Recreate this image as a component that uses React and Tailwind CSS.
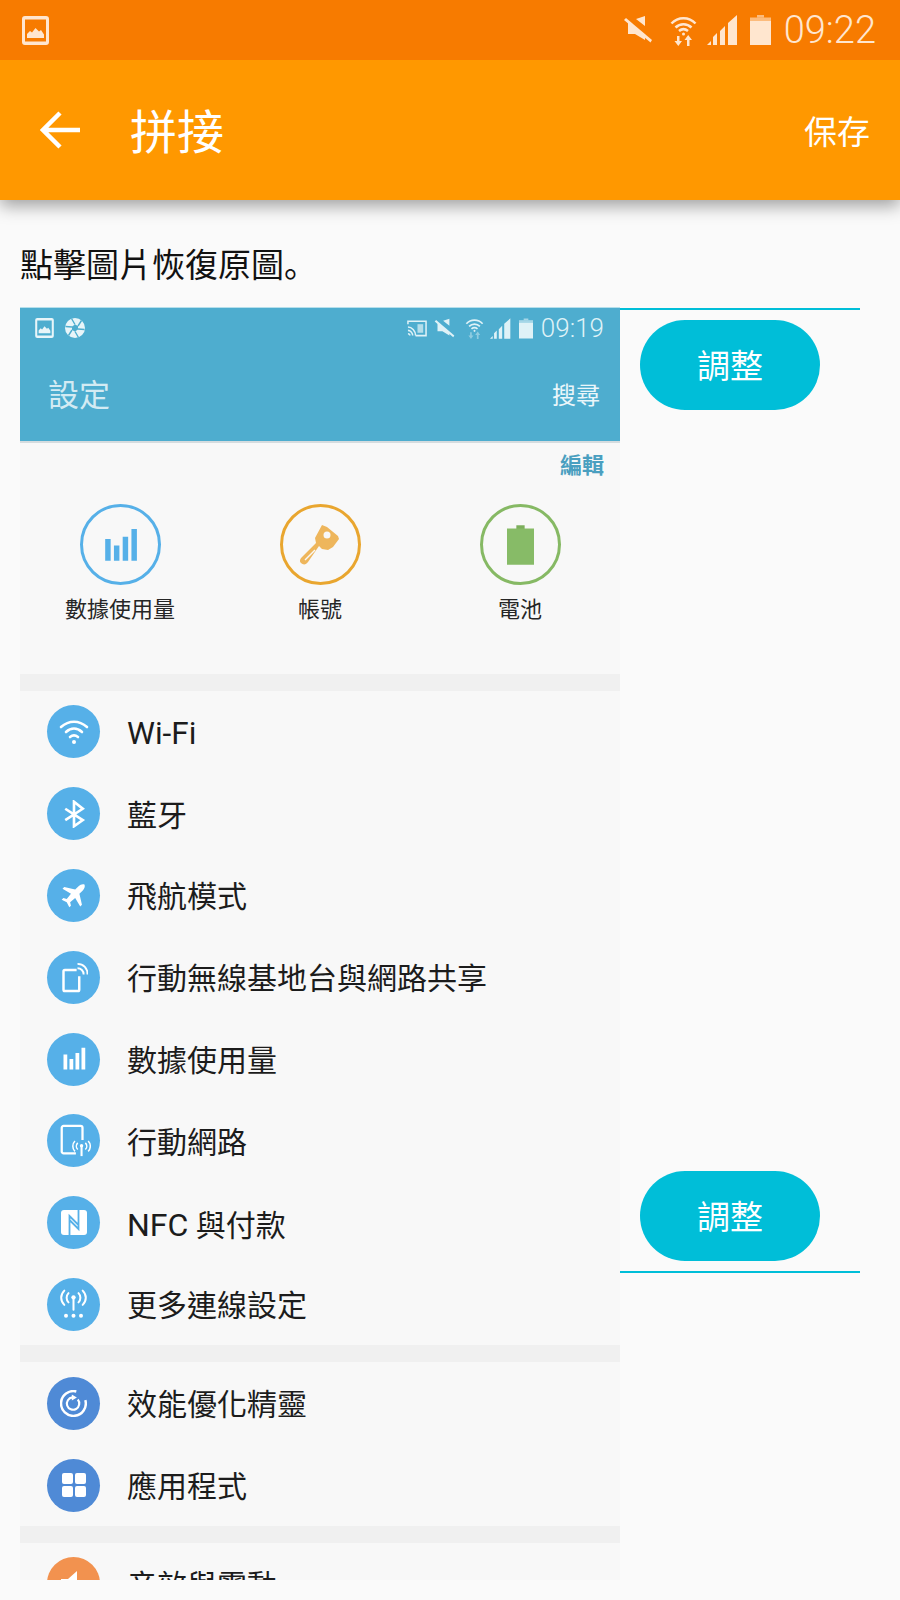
import React from 'react'

const ImageIcon = ({ className }) => (
    <svg viewBox="0 0 27 29" className={className} fill="currentColor">
        <path fillRule="evenodd" d="M3 0h21a3 3 0 0 1 3 3v23a3 3 0 0 1-3 3H3a3 3 0 0 1-3-3V3a3 3 0 0 1 3-3zM3 3.500v22h21v-22z" />
        <path d="M5 22v-4l3-3 2 1.500 3.500-4.500 3.500 3.500 2-1.500 3 4.500V22z" />
    </svg>
)

const MuteIcon = ({ className }) => (
    <svg viewBox="0 0 30 30" className={className} fill="currentColor">
        <path d="M22 1v10L13 4zM6 7l16 13v5L12 19H5V8z" />
        <path d="M1 5l2-2 26 22-1.500 2.500z" />
    </svg>
)

const WifiArrowsIcon = ({ className, arrowOpacity = 1 }) => (
    <svg viewBox="0 0 27 31" className={className} fill="none" stroke="currentColor">
        <path d="M1.500 8.500C8 1.500 19 1.500 25.500 8.500" strokeWidth="2.500" />
        <path d="M5.500 12.500C10 8 17 8 21.500 12.500" strokeWidth="2.500" />
        <path d="M9 16c3-2.500 6-2.500 9 0" strokeWidth="2.500" />
        <circle cx="13.500" cy="19" r="1.500" fill="currentColor" stroke="none" />
        <g fill="currentColor" stroke="none" opacity={arrowOpacity}>
            <path d="M7 21h2.500v5H12l-3.700 5-3.800-5H7z" />
            <path d="M17 31h2.500v-6H22l-3.800-5-3.700 5H17z" />
        </g>
    </svg>
)

const SignalIcon = ({ className }) => (
    <svg viewBox="0 0 31 30" className={className} fill="currentColor">
        <path d="M0 30l4-4v4zM6 30v-8l4-4v12zM13 30V16l5-5v19zM21 30V8l9-8v30h-9z" />
    </svg>
)

const BatteryIcon = ({ className }) => (
    <svg viewBox="0 0 21 30" className={className} fill="currentColor">
        <path d="M7 0h7v2.500H7z" opacity="0.6" />
        <path d="M0 2.500h21V6H0z" opacity="0.6" />
        <path d="M0 6h21v24H0z" />
    </svg>
)

const CastIcon = ({ className }) => (
    <svg viewBox="0 0 21 18" className={className} fill="none" stroke="currentColor" strokeWidth="1.600">
        <path d="M1 5V2h19v15H9" />
        <path d="M1 8c4 0 8 4 8 9M1 11.500c2.500 0 5 2.500 5 5.500M1 15c1 0 2 1 2 2" />
        <rect x="11" y="5" width="6" height="9" fill="currentColor" stroke="none" opacity="0.7" />
    </svg>
)

const ApertureIcon = ({ className }) => (
    <svg viewBox="0 0 20 20" className={className}>
        <circle cx="10" cy="10" r="10" fill="currentColor" />
        <g stroke="#4eadcf" strokeWidth="1.400" fill="none">
            <path d="M6.500 0.500 10 6.500M16.500 2.500 13 8M19.500 11.500 13 11M13.500 19.500 10 13.500M3.500 17.500 7 12M0.500 8.500 7 9" />
        </g>
        <path d="M10 6.500 13 8v3.500L10 13.500 7 12V8.500z" fill="#4eadcf" />
    </svg>
)

const WifiGlyph = () => (
    <svg viewBox="0 0 32 32" className="w-8 h-8" fill="none" stroke="#ffffff" strokeWidth="2.600" strokeLinecap="round">
        <path d="M3 11c8-7 18-7 26 0" />
        <path d="M8 16c5-4.500 11-4.500 16 0" />
        <path d="M12 21c2.500-2 5.500-2 8 0" />
        <circle cx="16" cy="26" r="2" fill="#ffffff" stroke="none" />
    </svg>
)

const BluetoothGlyph = () => (
    <svg viewBox="0 0 32 32" className="w-[28px] h-[28px]" fill="none" stroke="#ffffff" strokeWidth="3">
        <path d="M6 10l20 13-10 7V2l10 8L6 23" />
    </svg>
)

const PlaneGlyph = () => (
    <svg viewBox="0 0 32 32" className="w-[27px] h-[27px]" fill="#ffffff">
        <path d="M29 3c-2-1-5 0-7 2l-4 4L5 6 3 8l10 6-5 6-4-1-2 2 6 3 3 6 2-2-1-4 6-5 6 10 2-2-3-13 4-4c2-2 3-5 2-7z" />
    </svg>
)

const HotspotGlyph = () => (
    <svg viewBox="0 0 32 36" className="w-[28px] h-[32px]" fill="none" stroke="#ffffff" strokeWidth="2">
        <path d="M19 10H5.500A1.500 1.500 0 0 0 4 11.500v21A1.500 1.500 0 0 0 5.500 34h15a1.500 1.500 0 0 0 1.500-1.500V17" strokeWidth="2.800" />
        <path d="M20 8c4 0 7 3 7 7M20 3c7 0 11.500 5 11.500 12" strokeWidth="2.200" />
    </svg>
)

const BarsGlyph = ({ className, fill = '#ffffff' }) => (
    <svg viewBox="0 0 32 32" className={className} fill={fill}>
        <path d="M2 10h5v20H2zM10 16h5v14h-5zM18 8h5v22h-5zM26 1h5v29h-5z" />
    </svg>
)

const MobileNetGlyph = () => (
    <svg viewBox="0 0 36 36" className="w-[34px] h-[34px]" fill="none" stroke="#ffffff" strokeWidth="2">
        <path d="M20 31H7a2 2 0 0 1-2-2V4a2 2 0 0 1 2-2h18a2 2 0 0 1 2 2v13" strokeWidth="2.400" />
        <path d="M26 23v11" strokeWidth="2.200" />
        <circle cx="26" cy="23" r="1.800" fill="#ffffff" stroke="none" />
        <path d="M22 20c-2 2-2 5 0 7M30 20c2 2 2 5 0 7M19 18c-3 3-3 8 0 11M33 18c3 3 3 8 0 11" strokeWidth="1.600" />
    </svg>
)

const NfcGlyph = () => (
    <svg viewBox="0 0 26 25" className="w-[26px] h-[25px]">
        <rect width="26" height="25" rx="3" fill="#ffffff" />
        <path d="M8.500 25V6l9 9M17.500 0v19l-9-9" fill="none" stroke="#56b0e8" strokeWidth="1.800" />
    </svg>
)

const AntennaGlyph = () => (
    <svg viewBox="0 0 32 36" className="w-[27px] h-[30px]" fill="none" stroke="#ffffff" strokeWidth="2.400" strokeLinecap="round">
        <path d="M16 11v14" />
        <circle cx="16" cy="10" r="2.600" fill="#ffffff" stroke="none" />
        <path d="M10 5c-3 3-3 8 0 11M22 5c3 3 3 8 0 11M5 2c-5 5-5 12 0 17M27 2c5 5 5 12 0 17" />
        <circle cx="7" cy="32" r="2.400" fill="#ffffff" stroke="none" />
        <circle cx="16" cy="32" r="2.400" fill="#ffffff" stroke="none" />
        <circle cx="25" cy="32" r="2.400" fill="#ffffff" stroke="none" />
    </svg>
)

const PowerGlyph = () => (
    <svg viewBox="0 0 24 24" className="w-[27px] h-[27px]" fill="none" stroke="#ffffff">
        <path d="M22.500 9A11 11 0 1 1 14.500 1.300" strokeWidth="2.200" />
        <path d="M15.800 8.500A5.500 5.500 0 1 1 11 6.600" strokeWidth="1.900" />
        <path d="M10.500 4l4.500 2.700-4.500 2.700z" fill="#ffffff" stroke="none" />
    </svg>
)

const GridGlyph = () => (
    <svg viewBox="0 0 24 24" className="w-6 h-6" fill="#ffffff">
        <rect x="0" y="0" width="11" height="11" rx="2" />
        <rect x="13" y="0" width="11" height="11" rx="2" />
        <rect x="0" y="13" width="11" height="11" rx="2" />
        <rect x="13" y="13" width="11" height="11" rx="2" />
    </svg>
)

const SoundGlyph = () => (
    <svg viewBox="0 0 32 32" className="w-8 h-8" fill="#ffffff">
        <path d="M19 3v26L10 21H3V11h7z" />
    </svg>
)

const KeyGlyph = () => (
    <svg viewBox="0 0 40 42" className="w-10 h-[42px]">
        <path fill="#eeb65c" d="M22 1l5 2 11 9 1 3-6 8-5 3-6-1-3-3L8 38c-2 3-5 3-7 1s-1-4 1-6l14-14-1-5z" />
        <circle cx="27" cy="11" r="3.500" fill="#f8f8f8" />
        <path d="M5 36l10-10" stroke="#f8f8f8" strokeWidth="1.500" />
    </svg>
)

const SmallBattery = () => (
    <svg viewBox="0 0 26 38" className="w-[27px] h-[40px]">
        <path fill="#7daf5c" d="M9 0h8v4H9z" />
        <path fill="#87bb67" d="M0 3h26v35H0z" />
    </svg>
)

const Shortcut = ({ label, ring, children }) => (
    <div className="flex flex-col items-center w-[200px]">
        <div className={`w-[81px] h-[81px] rounded-full border-[3px] ${ring} flex items-center justify-center`}>
            {children}
        </div>
        <span className="mt-[10px] text-[22px] leading-[30px] text-[#262626]">{label}</span>
    </div>
)

const Row = ({ color, label, children }) => (
    <div className="h-[81.8px] flex items-center shrink-0">
        <div className={`w-[53px] h-[53px] rounded-full ${color} flex items-center justify-center ml-[27px] shrink-0`}>
            {children}
        </div>
        <span className="ml-[27px] pt-1 text-[30px] leading-none text-[#1c1c1c]">{label}</span>
    </div>
)

const Gap = () => <div className="h-[17px] bg-[#f0f0f0] shrink-0" />

const AdjustButton = () => (
    <button className="ml-5 w-[180px] h-[90px] pt-1 rounded-full bg-[#00bed8] text-white text-[33px] flex items-center justify-center shrink-0">
        調整
    </button>
)

const App = () => {
    return (
        <div className="w-[900px] h-[1600px] bg-[#fafafa] overflow-hidden font-['Roboto','Noto_Sans_CJK_TC',sans-serif]">
            {/* status bar */}
            <div className="relative z-20 h-[60px] bg-[#f77b00] flex items-center justify-between pl-[22px] pr-6 text-[#ffe6cf]">
                <ImageIcon className="w-[27px] h-[29px]" />
                <div className="flex items-center">
                    <MuteIcon className="w-[30px] h-[30px]" />
                    <WifiArrowsIcon className="w-[27px] h-[31px] ml-[17px]" />
                    <SignalIcon className="w-[31px] h-[30px] ml-[10px]" />
                    <BatteryIcon className="w-[21px] h-[30px] ml-3" />
                    <span className="ml-[13px] text-[38px] leading-none font-light">09:22</span>
                </div>
            </div>

            {/* app bar */}
            <div className="relative z-10 h-[140px] bg-[#ff9800] flex items-center justify-between pl-10 pr-[30px] text-white shadow-[0_6px_16px_rgba(0,0,0,0.36)]">
                <div className="flex items-center">
                    <svg viewBox="0 0 40 38" className="w-10 h-[38px]" fill="none" stroke="#ffffff" strokeWidth="4.500">
                        <path d="M20 2L3 19l17 17M3 19h37" />
                    </svg>
                    <span className="ml-[50px] pt-1 text-[47px] leading-none">拼接</span>
                </div>
                <span className="pt-1 text-[33px] leading-none">保存</span>
            </div>

            {/* hint */}
            <div className="h-[107px] pl-5 flex items-center pt-[21px] text-[33px] leading-none text-[#111111]">
                <span>點擊圖片恢復原圖<span className="font-['Noto_Sans_CJK_JP']">。</span></span>
            </div>

            <div className="flex items-stretch">
                {/* stitched screenshot */}
                <div className="ml-5 w-[600px] h-[1273px] overflow-hidden bg-[#f8f8f8] shrink-0 border-t border-[#b5dfeb]">
                    <div className="h-[135px] bg-[#4eadcf] border-b-2 border-[#d5dcdf] text-[#dff2f7]">
                        <div className="h-[30px] flex items-end justify-between pl-[15px] pr-4">
                            <div className="flex items-center h-5 gap-[11px] text-[#e8f5f9]">
                                <ImageIcon className="w-[19px] h-5" />
                                <ApertureIcon className="w-5 h-5" />
                            </div>
                            <div className="flex items-center h-5">
                                <CastIcon className="w-5 h-[18px]" />
                                <MuteIcon className="w-[21px] h-[21px] ml-[7px]" />
                                <WifiArrowsIcon className="w-[19px] h-[21px] ml-[10px]" arrowOpacity={0.45} />
                                <SignalIcon className="w-[21px] h-[21px] ml-[6px]" />
                                <BatteryIcon className="w-[14px] h-[21px] ml-2" />
                                <span className="ml-2 text-[26px] leading-none font-light">09:19</span>
                            </div>
                        </div>
                        <div className="h-[103px] flex items-center justify-between pl-7 pr-[20px] pt-3">
                            <span className="text-[31px] leading-none text-[#d3ebf3]">設定</span>
                            <span className="text-[24px] leading-none text-[#eaf6fa]">搜尋</span>
                        </div>
                    </div>

                    <div className="h-[231px] flex flex-col">
                        <div className="flex justify-end pr-4 pt-[11px] text-[22px] leading-[24px] font-bold text-[#4a9fc0]">編輯</div>
                        <div className="flex mt-[26px]">
                            <Shortcut label="數據使用量" ring="border-[#56b0e8]">
                                <BarsGlyph className="w-[35px] h-[35px] mt-[2px]" fill="#56b0e8" />
                            </Shortcut>
                            <Shortcut label="帳號" ring="border-[#e9a62f]">
                                <KeyGlyph />
                            </Shortcut>
                            <Shortcut label="電池" ring="border-[#86b964]">
                                <SmallBattery />
                            </Shortcut>
                        </div>
                    </div>

                    <Gap />
                    <Row color="bg-[#56b0e8]" label={<span className="text-[31.500px]">Wi-Fi</span>}><WifiGlyph /></Row>
                    <Row color="bg-[#56b0e8]" label="藍牙"><BluetoothGlyph /></Row>
                    <Row color="bg-[#56b0e8]" label="飛航模式"><PlaneGlyph /></Row>
                    <Row color="bg-[#56b0e8]" label="行動無線基地台與網路共享"><HotspotGlyph /></Row>
                    <Row color="bg-[#56b0e8]" label="數據使用量"><BarsGlyph className="w-[24px] h-[24px]" /></Row>
                    <Row color="bg-[#56b0e8]" label="行動網路"><MobileNetGlyph /></Row>
                    <Row color="bg-[#56b0e8]" label={<><span className="text-[32px]">NFC</span> 與付款</>}><NfcGlyph /></Row>
                    <Row color="bg-[#56b0e8]" label="更多連線設定"><AntennaGlyph /></Row>
                    <Gap />
                    <Row color="bg-[#4f8ad6]" label="效能優化精靈"><PowerGlyph /></Row>
                    <Row color="bg-[#4f8ad6]" label="應用程式"><GridGlyph /></Row>
                    <Gap />
                    <Row color="bg-[#f2924f]" label="音效與震動"><SoundGlyph /></Row>
                </div>

                {/* crop handles */}
                <div className="w-[240px] h-[966px] flex flex-col justify-between pt-px">
                    <div>
                        <div className="h-[2px] bg-[#00bed8]" />
                        <div className="mt-[10px]"><AdjustButton /></div>
                    </div>
                    <div>
                        <AdjustButton />
                        <div className="h-[2px] mt-[10px] bg-[#00bed8]" />
                    </div>
                </div>
            </div>
        </div>
    )
}

export default App
